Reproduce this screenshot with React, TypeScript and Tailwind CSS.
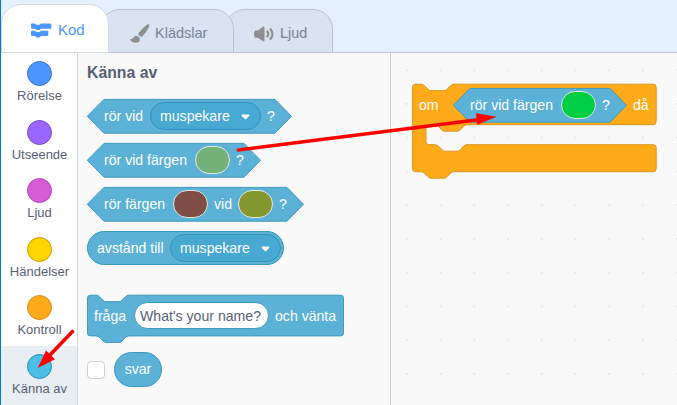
import React from 'react';

type Shape = { w: number; h: number; d: string; fill: string; stroke: string };

const BLUE = '#5cb1d6';
const BLUE_EDGE = '#3d98c0';

function ShapeBg({ w, h, d, fill, stroke }: Shape) {
  return (
    <svg className="absolute left-0 top-0 overflow-visible" width={w} height={h}>
      <path d={d} fill={fill} stroke={stroke} strokeWidth="1" />
    </svg>
  );
}

const hexPath = (w: number) =>
  `M17 .4H${w - 17}L${w - 0.5} 17.3L${w - 17} 34.2H17L.3 17.3Z`;

function Hex({ w, className, children }: { w: number; className: string; children: React.ReactNode }) {
  return (
    <div className={`relative h-[34px] ${className}`}>
      <ShapeBg w={w} h={35} d={hexPath(w)} fill={BLUE} stroke={BLUE_EDGE} />
      <div className="relative flex h-full items-center whitespace-nowrap pl-[17px]">{children}</div>
    </div>
  );
}

function Menu() {
  return (
    <div className="flex h-7 w-[111px] shrink-0 items-center rounded-full border border-[#3291bb] bg-[#47a8d1] pl-[9px]">
      <span className="w-[81px]">muspekare</span>
      <svg width="9" height="6" viewBox="0 0 9 6" className="mt-0.5">
        <path d="M1.2.5H7.8Q9 1 8.2 2L5.2 5Q4.5 5.6 3.8 5L.8 2Q0 1 1.2.5Z" fill="white" />
      </svg>
    </div>
  );
}

function Colour({ className }: { className: string }) {
  return <div className={`h-7 w-[35px] shrink-0 rounded-[14px] border border-[#e3e8e0] ${className}`} />;
}

const categories = [
  { name: 'Rörelse', dot: 'bg-[#4c97ff] border-[#3373cc]' },
  { name: 'Utseende', dot: 'bg-[#9966ff] border-[#774dcb]' },
  { name: 'Ljud', dot: 'bg-[#d65cd6] border-[#bd42bd]' },
  { name: 'Händelser', dot: 'bg-[#ffd500] border-[#cc9900]' },
  { name: 'Kontroll', dot: 'bg-[#ffab19] border-[#cf8b17]' },
  { name: 'Känna av', dot: 'bg-[#4cbfe6] border-[#2e8eb8]' },
];

function Tabs() {
  return (
    <div className="flex h-[53px] items-end border-b border-[#bcc5d8] bg-[#e5f0ff] text-[14.5px] text-[#7b8095]">
      <div className="relative z-20 -mb-px flex h-[49px] w-[108px] items-center rounded-t-[20px] border border-[#d5d8de] bg-white pl-[29px] pt-[3px] text-[15px] text-[#4c97ff]">
        <svg width="21" height="15" viewBox="0 0 21 15" fill="#4c97ff">
          <path d="M1 .5H4L5.5 1.8H8.5L10 .5H19.3Q20.3 .5 20.3 1.5V4.8Q20.3 5.8 19.3 5.8H10L8.5 7.1H5.5L4 5.8H1Q0 5.8 0 4.8V1.5Q0 .5 1 .5Z" />
          <path d="M1 7.8H4L5.5 9.1H8.5L10 7.8H16.3Q17.3 7.8 17.3 8.8V12.1Q17.3 13.1 16.3 13.1H10L8.5 14.5H5.5L4 13.1H1Q0 13.1 0 12.1V8.8Q0 7.8 1 7.8Z" />
        </svg>
        <span className="ml-[6px]">Kod</span>
      </div>
      <div className="relative z-10 -mb-px -ml-[9px] flex h-[44px] w-[134px] items-center rounded-t-[20px] border border-[#b9c1d3] bg-[#d9e3f2] pl-[29px] pt-[5px]">
        <svg width="20" height="20" viewBox="0 0 20 20" fill="#8e8e8e">
          <path d="M18.7.2Q19.8.7 19 2.8Q16.5 8.8 12.3 12.5Q11.2 13.3 10 12.2L8.8 11Q8 10 8.8 8.8Q12.3 4 16.9.7Q18-.1 18.7.2Z" />
          <path d="M7.2 12Q9.5 13 9.8 14.5Q10.2 18.5 6 18.8Q2 19 .2 15.8Q-.1 15 .9 15.1Q2.6 15.1 3.7 13.2Q5 11.2 7.2 12Z" />
        </svg>
        <span className="ml-[5px]">Klädslar</span>
      </div>
      <div className="-mb-px -ml-[9px] flex h-[44px] w-[108px] items-center rounded-t-[20px] border border-[#b9c1d3] bg-[#d9e3f2] pl-[28px] pt-[5px]">
        <svg width="20" height="16" viewBox="0 0 20 16" fill="none">
          <path d="M1 4.5H4L9 .7Q10.5 0 10.5 1.5V14.5Q10.5 16 9 15.2L4 11.8H1Q0 10 0 8Q0 6 1 4.5Z" fill="#8e8e8e" />
          <path d="M13.3 5.5Q15.3 8 13.3 10.5M16.6 3.2Q20.4 8 16.6 12.8" stroke="#8e8e8e" strokeWidth="2.2" strokeLinecap="round" />
        </svg>
        <span className="ml-[6px]">Ljud</span>
      </div>
    </div>
  );
}

function Categories() {
  return (
    <div className="flex w-[77px] shrink-0 flex-col border-r border-[#d5d5d5] bg-white">
      {categories.map((c, i) => (
        <div
          key={c.name}
          className={`flex shrink-0 flex-col items-center pl-px pt-2 text-[13px] leading-[15px] text-[#575e75] ${i === 5 ? 'h-[60px] bg-[#e9eef2]' : 'h-[58.5px]'}`}
        >
          <div className={`-ml-px h-[25px] w-[25px] rounded-full border ${c.dot}`} />
          <span className="mt-[2px]">{c.name}</span>
        </div>
      ))}
    </div>
  );
}

const askPath =
  'M3.5 .2H9Q11 .2 12.5 1.7L16 5.2Q17.5 6.7 19 6.7H32Q33.5 6.7 35 5.2L38.5 1.7Q40 .2 42 .2H253.5Q256.5 .2 256.5 3.2V37.9Q256.5 40.9 253.5 40.9H42Q40 40.9 38.5 42.4L35 45.9Q33.5 47.4 32 47.4H19Q17.5 47.4 16 45.9L12.5 42.4Q11 40.9 9 40.9H3.5Q.5 40.9 .5 37.9V3.2Q.5 .2 3.5 .2Z';

const ifPath =
  'M3.5 .2H9Q11 .2 12.5 1.7L16 5.2Q17.5 6.7 19 6.7H32Q33.5 6.7 35 5.2L38.5 1.7Q40 .2 42 .2H241.2Q244.2 .2 244.2 3.2V37.7Q244.2 40.7 241.2 40.7H55Q53 40.7 51.5 42.2L48.5 45.7Q47 47.2 45 47.2H33Q31 47.2 29.5 45.7L26.5 42.2Q25 40.7 23 40.7H17Q14 40.7 14 43.7V57.7Q14 60.7 17 60.7H23Q25 60.7 26.5 62.2L30 65.7Q31.5 67.2 33 67.2H45Q47 67.2 48.5 65.7L51.5 62.2Q53 60.7 55 60.7H241.2Q244.2 60.7 244.2 63.7V84.7Q244.2 87.7 241.2 87.7H42Q40 87.7 38.5 89.2L35 92.7Q33.5 94.2 32 94.2H19Q17.5 94.2 16 92.7L12.5 89.2Q11 87.7 9 87.7H3.5Q.5 87.7 .5 84.7V3.2Q.5 .2 3.5 .2Z';

function Palette() {
  return (
    <div className="flex w-[313px] shrink-0 flex-col items-start border-r border-[#cfcfcf] bg-[#f9f9f9] pl-[9px] text-[14.1px] text-white [&_span]:pt-[2px]">
      <h2 className="mt-[10px] h-[20px] text-[15.8px] font-bold leading-[20px] text-[#575e75]">Känna av</h2>
      <Hex w={205} className="mt-4 w-[205px]">
        <span className="w-[46px]">rör vid</span>
        <Menu />
        <span className="ml-[6px]">?</span>
      </Hex>
      <Hex w={174} className="mt-[10px] w-[174px]">
        <span className="w-[91px]">rör vid färgen</span>
        <Colour className="bg-[#72b177]" />
        <span className="ml-[6px]">?</span>
      </Hex>
      <Hex w={217} className="mt-[10px] w-[217px]">
        <span className="w-[69px]">rör färgen</span>
        <Colour className="bg-[#7e4e47]" />
        <span className="ml-[6px] w-[24px]">vid</span>
        <Colour className="bg-[#85982f]" />
        <span className="ml-[6px]">?</span>
      </Hex>
      <div className="mt-[10px] flex h-[34px] w-[197px] items-center whitespace-nowrap rounded-full border border-[#3d98c0] bg-[#5cb1d6] pl-[9px]">
        <span className="w-[73px]">avstånd till</span>
        <Menu />
      </div>
      <div className="relative mt-[30px] h-[41px] w-[257px]">
        <ShapeBg w={257} h={49} d={askPath} fill={BLUE} stroke={BLUE_EDGE} />
        <div className="relative flex h-full items-center whitespace-nowrap pl-[7px]">
          <span className="w-[40px]">fråga</span>
          <div className="flex h-[27px] w-[135px] shrink-0 items-center rounded-full border border-[#3d98c0] bg-white pl-[5px] text-[#575e75]">
            <span>What's your name?</span>
          </div>
          <span className="ml-[6px]">och vänta</span>
        </div>
      </div>
      <div className="mt-4 flex items-center">
        <div className="h-[18px] w-[18px] rounded-[4px] border border-[#cfcfcf] bg-white" />
        <div className="ml-[9px] flex h-[35px] w-[48px] items-center justify-center rounded-full border border-[#3d98c0] bg-[#5cb1d6]">
          svar
        </div>
      </div>
    </div>
  );
}

function Workspace() {
  return (
    <div className="relative min-w-0 flex-1 overflow-hidden bg-[#f9f9f9] text-[14.1px] text-white [&_span]:pt-[2px]">
      <svg className="absolute inset-0 h-full w-full">
        <defs>
          <pattern id="dots" x="-1" y="0.4" width="33.75" height="33.75" patternUnits="userSpaceOnUse">
            <rect x="16" y="16" width="1.5" height="1.5" fill="#dcdcdc" />
          </pattern>
        </defs>
        <rect width="100%" height="100%" fill="url(#dots)" />
      </svg>
      <div className="absolute left-[21px] top-[31px] h-[95px] w-[245px]">
        <ShapeBg w={245} h={95} d={ifPath} fill="#ffab19" stroke="#db9420" />
        <div className="relative flex h-[41px] items-center whitespace-nowrap pl-[7px]">
          <span className="w-[34px]">om</span>
          <Hex w={174} className="w-[174px]">
            <span className="w-[91px]">rör vid färgen</span>
            <Colour className="bg-[#00cf44]" />
            <span className="ml-[6px]">?</span>
          </Hex>
          <span className="ml-[6px]">då</span>
        </div>
      </div>
    </div>
  );
}

export default function App() {
  return (
    <div className="relative flex h-[405px] w-[677px] flex-col overflow-hidden border-l border-[#0078d7] bg-white font-['Liberation_Sans',Arial,sans-serif]">
      <Tabs />
      <div className="flex min-h-0 flex-1">
        <Categories />
        <Palette />
        <Workspace />
      </div>
      <svg className="pointer-events-none absolute -left-px top-0 z-30" width="677" height="405" fill="#ff0000" stroke="#ff0000">
        <path d="M238.5 150L480 119.5" strokeWidth="3.6" strokeLinecap="round" />
        <path d="M496.5 116.8L476 113.2L477.2 124.8Z" stroke="none" />
        <path d="M72.5 331.5L49 356" strokeWidth="3.6" strokeLinecap="round" />
        <path d="M37.8 368L46 350.5L55 359.2Z" stroke="none" />
      </svg>
    </div>
  );
}
